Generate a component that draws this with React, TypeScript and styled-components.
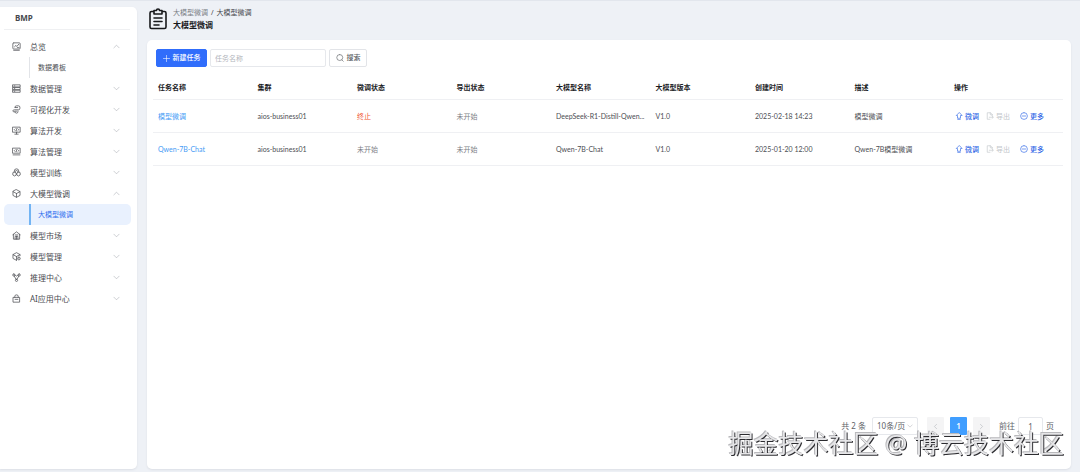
import React from "react";
import styled, { createGlobalStyle } from "styled-components";

const GlobalStyle = createGlobalStyle`
  * { box-sizing: border-box; }
  body {
    margin: 0;
    background: #eef1f6;
    color: #4c4e53;
    font-family: "Noto Sans", "Noto Sans CJK SC", sans-serif;
    font-size: 7px;
    line-height: 10px;
  }
  button, input, select { font: inherit; color: inherit; margin: 0; }
  a { color: inherit; text-decoration: none; }
`;

const Page = styled.div`
  display: flex;
  gap: 10px;
  min-height: 100vh;
  padding: 6px 9px 3px 0;
  border-top: 1px solid #e2e6ed;
`;

const Sidebar = styled.aside`
  flex: 0 0 137px;
  background: #fff;
  border-radius: 0 5px 5px 0;
  box-shadow: 0 1px 2px #dcdfe5;
`;

const Brand = styled.div`
  height: 23px;
  margin: 0 7px 6px 4px;
  padding-left: 11px;
  border-bottom: 1px solid #eff0f2;
  font-size: 8px;
  font-weight: 700;
  line-height: 22px;
  color: #46484d;
`;

const MenuList = styled.ul`
  list-style: none;
  margin: 0;
  padding: 0;
`;

const MenuButton = styled.button`
  display: flex;
  align-items: center;
  width: 100%;
  height: 21px;
  padding: 0 17px 0 12px;
  border: 0;
  background: none;
  font-size: 8px;
  text-align: left;
  color: #4a4c51;
`;

const MenuLabel = styled.span`
  flex: 1;
  margin-left: 9px;
`;

const SubLink = styled.a<{ $active?: boolean }>`
  display: flex;
  align-items: center;
  height: 21px;
  margin: 0 6px 0 4px;
  padding-left: 25px;
  border-radius: 5px;
  background: ${(p) => (p.$active ? "#e9f1fe" : "transparent")};
  color: ${(p) => (p.$active ? "#3370ee" : "#4c4e53")};
  &::before {
    content: "";
    align-self: stretch;
    width: ${(p) => (p.$active ? "2px" : "1px")};
    margin-right: ${(p) => (p.$active ? "7px" : "8px")};
    background: ${(p) => (p.$active ? "#72b4f3" : "#e2e4e8")};
  }
`;

const Main = styled.main`
  flex: 1;
  min-width: 0;
  display: flex;
  flex-direction: column;
`;

const PageHeader = styled.header`
  display: flex;
  align-items: center;
  gap: 4px;
  height: 24px;
  margin-bottom: 9px;
  color: #17181b;
`;

const Breadcrumb = styled.nav`
  display: flex;
  gap: 3px;
  line-height: 12px;
  color: #46484d;
  a { color: #7b7f86; }
`;

const Title = styled.h1`
  margin: 0;
  font-size: 8px;
  line-height: 12px;
  font-weight: 700;
`;

const Card = styled.section`
  flex: 1;
  display: flex;
  flex-direction: column;
  padding: 9px 8px 34px 6px;
  border-radius: 5px;
  background: #fff;
  box-shadow: 0 1px 2px #dcdfe5;
`;

const Toolbar = styled.form`
  display: flex;
  gap: 3px;
  padding-left: 3px;
  margin-bottom: 8px;
`;

const Button = styled.button<{ $primary?: boolean }>`
  display: inline-flex;
  align-items: center;
  justify-content: center;
  gap: 3px;
  width: ${(p) => (p.$primary ? "51px" : "38px")};
  height: 18px;
  padding: 0;
  border: 1px solid ${(p) => (p.$primary ? "#306dfb" : "#e2e4e8")};
  border-radius: 2px;
  background: ${(p) => (p.$primary ? "#306dfb" : "#fff")};
  color: ${(p) => (p.$primary ? "#fff" : "#606368")};
  font-weight: 500;
`;

const SearchInput = styled.input`
  width: 116px;
  height: 18px;
  padding: 0 4px;
  border: 1px solid #e6e8ec;
  border-radius: 2px;
  outline: 0;
  &::placeholder { color: #b3b6bc; opacity: 1; }
`;

const Table = styled.table`
  width: 100%;
  table-layout: fixed;
  border-collapse: separate;
  border-spacing: 0;
  font-family: Lato, "Noto Sans CJK SC", sans-serif;
  th, td {
    padding: 0 5px;
    border-bottom: 1px solid #eff0f3;
    text-align: left;
    white-space: nowrap;
    overflow: hidden;
    text-overflow: ellipsis;
  }
  th { height: 25px; font-weight: 700; color: #1b1c1f; }
  td { height: 33px; }
  th:last-child { width: 114px; }
`;

const NameLink = styled.a`
  color: #469bf5;
`;

const Status = styled.span<{ $stopped?: boolean }>`
  color: ${(p) => (p.$stopped ? "#f0552f" : "#7d8086")};
`;

const Actions = styled.div`
  display: flex;
  gap: 7px;
  padding-left: 1px;
`;

const ActionButton = styled.button`
  display: inline-flex;
  align-items: center;
  gap: 2px;
  padding: 0;
  border: 0;
  background: none;
  font-weight: 500;
  color: #3067e6;
  &:disabled { color: #c3c6cb; font-weight: 400; }
  &:last-child { margin-left: 3px; }
`;

const Pagination = styled.footer`
  display: flex;
  align-items: center;
  justify-content: flex-end;
  height: 18px;
  margin-top: auto;
  padding-right: 9px;
  font-size: 8px;
  color: #606368;
`;

const SizeBox = styled.label`
  display: flex;
  align-items: center;
  width: 46px;
  height: 18px;
  margin: 0 9px 0 6px;
  padding: 0 4px;
  border: 1px solid #e6e8ec;
  border-radius: 2px;
  select {
    flex: 1;
    min-width: 0;
    padding: 0;
    border: 0;
    outline: 0;
    background: none;
    appearance: none;
  }
`;

const PageButton = styled.button<{ $current?: boolean }>`
  display: flex;
  align-items: center;
  justify-content: center;
  width: 17px;
  height: 18px;
  margin-right: 6px;
  padding: 0;
  border: 0;
  border-radius: 1px;
  background: ${(p) => (p.$current ? "#409eff" : "#f4f4f5")};
  color: ${(p) => (p.$current ? "#fff" : "#b0b3b9")};
  font-weight: 600;
`;

const Jump = styled.label`
  display: flex;
  align-items: center;
  gap: 3px;
  margin-left: 3px;
  input {
    width: 25px;
    height: 18px;
    padding: 0;
    border: 1px solid #e6e8ec;
    border-radius: 2px;
    text-align: center;
  }
`;

const Watermark = styled.div`
  position: fixed;
  right: 16px;
  bottom: 10px;
  font-size: 25px;
  line-height: 38px;
  white-space: pre;
  color: #e6e6e8;
  text-shadow: 1px 1px 0 #2c2c30, -1px -1px 0 #b9b9bc;
  pointer-events: none;
`;

const Glyph = styled.svg<{ $size?: number }>`
  flex: none;
  width: ${(p) => p.$size ?? 9}px;
  height: ${(p) => p.$size ?? 9}px;
  fill: none;
  stroke: currentColor;
  stroke-width: 1.3;
  stroke-linecap: round;
  stroke-linejoin: round;
`;

const icons: Record<string, string> = {
  overview: "M3 1.500h10q1.500 0 1.500 1.500v8q0 1.500-1.500 1.500H3q-1.500 0-1.500-1.500V3q0-1.500 1.500-1.500M3 14.800h10M4.500 8.500l2.500-2.500 1.500 2 3.500-4M9.500 10h3",
  data: "M1.500 1.500h13v3.700h-13zM1.500 6.300h13V10h-13zM1.500 11h13v3.700h-13zM4 3.400h1M4 8.200h1M4 12.900h1",
  visual: "M5.500 4.500V3.500q0-2 2.500-2h3.500q2.500 0 2.500 2.500v2q0 2.500-2.500 2.500H4.500q-3 0-3 2t3 2M5.500 4.500h4.500M10.500 10.500v1.500q0 2.500-2.500 2.500T5.500 12.500M8 11H5",
  develop: "M1.500 2h13v9h-13zM8 11v3M5 14.500h6M5.500 5L4 6.500 5.500 8M10.500 5L12 6.500 10.500 8M8.500 4.500l-1 4",
  manage: "M1.500 2h13v9h-13zM2 14h12M5.500 5L4 6.500 5.500 8M10.500 5L12 6.500 10.500 8M8.500 4.500l-1 4",
  train: "M4 7V5.500q0-4 4-4t4 4V7M6 7.500V6q0-1.500 2-1.500T10 6v1.500M4.500 7.500L7.500 9v3.500l-3 1.700-3-1.700V9zM11.500 7.500L8.500 9v3.500l3 1.700 3-1.700V9z",
  cube: "M8 1.200l6.300 3.400v6.800L8 14.800l-6.300-3.400V4.600zM2 4.800L8 8l6-3.200M8 8v6.500",
  market: "M1.500 6.500L8 1.500l6.500 5M2.500 6v8.500h11V6M5.500 14.500V9.500h5v5M5.500 7h5M8 9.500v5",
  model: "M14.300 6.500V4.600L8 1.200 1.700 4.600v6.800L8 14.800M2 4.800L8 8l6-3.200M8 8v6.500M12.200 9a2.500 2.500 0 1 0 0 5 2.500 2.500 0 0 0 0-5M12.200 11.500v.1",
  infer: "M3.200 1.500a2 2 0 1 0 0 4 2 2 0 0 0 0-4M12.800 1.500a2 2 0 1 0 0 4 2 2 0 0 0 0-4M8 11a2 2 0 1 0 0 4 2 2 0 0 0 0-4M5.200 3.500L8 5.500l2.800-2M4 5.500L7 11M12 5.500L9 11",
  app: "M2.500 6h11v8.500h-11zM5 6V4q0-2.500 3-2.500T11 4v2M5.500 9.500h5",
  down: "M2 5l6 6 6-6",
  up: "M2 11l6-6 6 6",
  left: "M10.500 3L5.500 8l5 5",
  right: "M5.500 3l5 5-5 5",
  plus: "M8 1v14M1 8h14",
  search: "M7.500 1a6 6 0 1 0 0 12 6 6 0 0 0 0-12M12 12l2.500 2.500",
  tune: "M8 1.500L2.500 7H5v5.500h6V7h2.500zM5.500 14.800h5",
  export: "M8 14.500H2.500v-13H9L12.500 5v2M8.500 1.500V5.500h4M6.500 10.500h7.500M12 8l2.500 2.500L12 13",
  more: "M8 1.200a6.800 6.800 0 1 0 0 13.600A6.800 6.800 0 0 0 8 1.200M4.800 8h6.400",
};

const Icon = ({ name, size }: { name: string; size?: number }) => (
  <Glyph viewBox="0 0 16 16" $size={size} aria-hidden="true">
    <path d={icons[name]} />
  </Glyph>
);

const ChevronWrap = styled.span`
  display: flex;
  color: #a9acb2;
`;

const menu = [
  { icon: "overview", label: "总览", child: "数据看板" },
  { icon: "data", label: "数据管理" },
  { icon: "visual", label: "可视化开发" },
  { icon: "develop", label: "算法开发" },
  { icon: "manage", label: "算法管理" },
  { icon: "train", label: "模型训练" },
  { icon: "cube", label: "大模型微调", child: "大模型微调", active: true },
  { icon: "market", label: "模型市场" },
  { icon: "model", label: "模型管理" },
  { icon: "infer", label: "推理中心" },
  { icon: "app", label: "AI应用中心" },
];

const columns = ["任务名称", "集群", "微调状态", "导出状态", "大模型名称", "大模型版本", "创建时间", "描述", "操作"];

const tasks = [
  { name: "模型微调", stopped: true, status: "终止", model: "DeepSeek-R1-Distill-Qwen...", created: "2025-02-18 14:23", note: "模型微调" },
  { name: "Qwen-7B-Chat", stopped: false, status: "未开始", model: "Qwen-7B-Chat", created: "2025-01-20 12:00", note: "Qwen-7B模型微调" },
];

export default function App() {
  return (
    <>
      <GlobalStyle />
      <Page>
        <Sidebar>
          <Brand>BMP</Brand>
          <MenuList>
            {menu.map((item) => (
              <li key={item.label}>
                <MenuButton type="button" aria-expanded={!!item.child}>
                  <Icon name={item.icon} />
                  <MenuLabel>{item.label}</MenuLabel>
                  <ChevronWrap>
                    <Icon name={item.child ? "up" : "down"} size={7} />
                  </ChevronWrap>
                </MenuButton>
                {item.child && (
                  <SubLink href="#" $active={item.active}>
                    {item.child}
                  </SubLink>
                )}
              </li>
            ))}
          </MenuList>
        </Sidebar>
        <Main>
          <PageHeader>
            <Glyph viewBox="0 0 22 22" $size={22} aria-hidden="true">
              <path strokeWidth="1.6" d="M7 3.500H4.500q-1.500 0-1.500 1.500v14q0 1.500 1.500 1.500h13q1.500 0 1.500-1.500V5q0-1.500-1.500-1.500H15M7 2.500h2.500q0-1.500 1.500-1.500t1.500 1.500H15V6H7zM7 10h8M7 13.500h8M7 17h5" />
            </Glyph>
            <div>
              <Breadcrumb aria-label="breadcrumb">
                <a href="#">大模型微调</a>
                <span>/</span>
                <span>大模型微调</span>
              </Breadcrumb>
              <Title>大模型微调</Title>
            </div>
          </PageHeader>
          <Card>
            <Toolbar onSubmit={(e) => e.preventDefault()}>
              <Button type="button" $primary>
                <Icon name="plus" size={7} />
                新建任务
              </Button>
              <SearchInput aria-label="任务名称" placeholder="任务名称" />
              <Button type="submit">
                <Icon name="search" size={8} />
                搜索
              </Button>
            </Toolbar>
            <Table>
              <thead>
                <tr>
                  {columns.map((c) => (
                    <th key={c}>{c}</th>
                  ))}
                </tr>
              </thead>
              <tbody>
                {tasks.map((t) => (
                  <tr key={t.name}>
                    <td><NameLink href="#">{t.name}</NameLink></td>
                    <td>aios-business01</td>
                    <td><Status $stopped={t.stopped}>{t.status}</Status></td>
                    <td><Status>未开始</Status></td>
                    <td>{t.model}</td>
                    <td>V1.0</td>
                    <td>{t.created}</td>
                    <td>{t.note}</td>
                    <td>
                      <Actions>
                        <ActionButton type="button"><Icon name="tune" size={8} />微调</ActionButton>
                        <ActionButton type="button" disabled><Icon name="export" size={8} />导出</ActionButton>
                        <ActionButton type="button"><Icon name="more" size={8} />更多</ActionButton>
                      </Actions>
                    </td>
                  </tr>
                ))}
              </tbody>
            </Table>
            <Pagination>
              <span>共 2 条</span>
              <SizeBox>
                <select aria-label="每页条数" defaultValue="10">
                  <option value="10">10条/页</option>
                </select>
                <ChevronWrap><Icon name="down" size={6} /></ChevronWrap>
              </SizeBox>
              <PageButton type="button" aria-label="上一页"><Icon name="left" size={7} /></PageButton>
              <PageButton type="button" $current>1</PageButton>
              <PageButton type="button" aria-label="下一页"><Icon name="right" size={7} /></PageButton>
              <Jump>
                前往
                <input type="text" defaultValue="1" />
                页
              </Jump>
            </Pagination>
          </Card>
        </Main>
      </Page>
      <Watermark>掘金技术社区 @ 博云技术社区</Watermark>
    </>
  );
}
